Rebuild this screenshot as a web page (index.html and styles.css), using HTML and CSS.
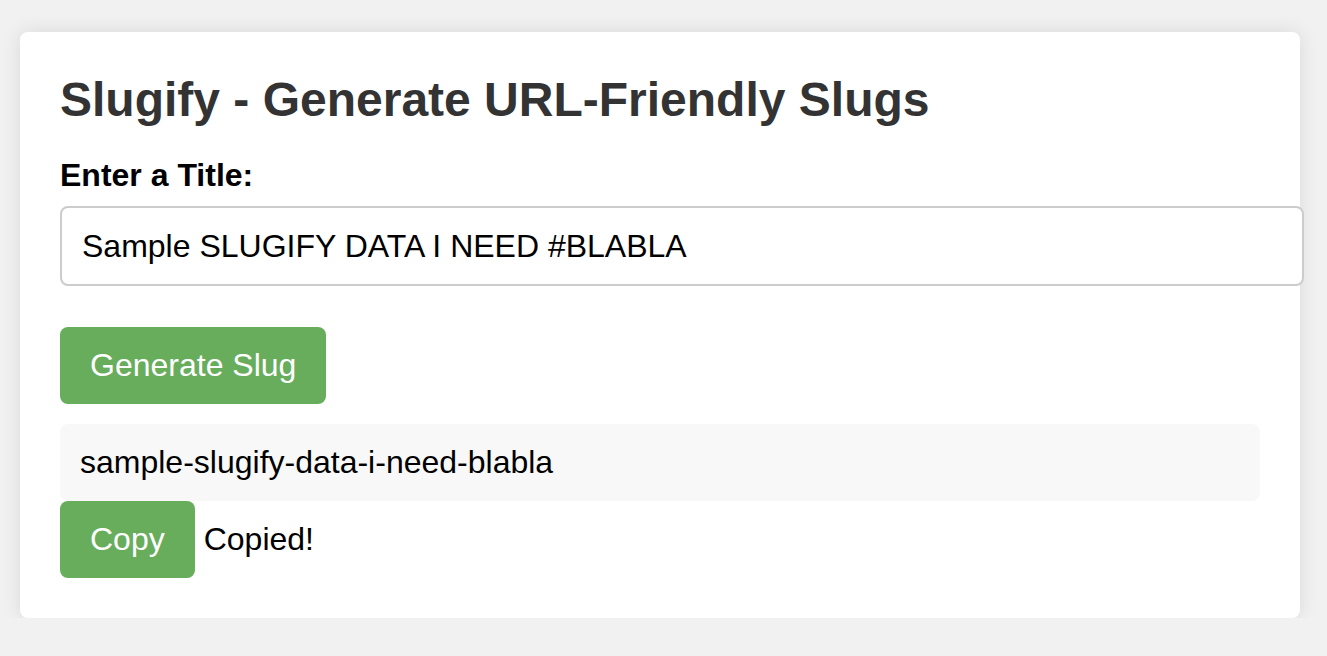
FILE: index.html
```html
<!DOCTYPE html>
<html lang="en">
<head>
<meta charset="utf-8">
<title>Slugify</title>
<link rel="stylesheet" href="styles.css">
</head>
<body>
<div class="card">
  <h1 class="title">Slugify - Generate URL-Friendly Slugs</h1>
  <label class="label" for="title-input">Enter a Title:</label>
  <input id="title-input" class="text-input" type="text" value="Sample SLUGIFY DATA I NEED #BLABLA">
  <div class="actions">
    <button class="btn" type="button">Generate Slug</button>
  </div>
  <div class="result">sample-slugify-data-i-need-blabla</div>
  <div class="copy-row">
    <button class="btn" type="button">Copy</button>
    <span class="copied">Copied!</span>
  </div>
</div>
</body>
</html>
```

FILE: styles.css
```css
html, body {
  margin: 0;
  padding: 0;
}

body {
  background: #f1f1f1;
  font-family: "Liberation Sans", Arial, Helvetica, sans-serif;
  padding: 32px 20px 0 20px;
}

.card {
  width: 1200px;
  padding: 40px;
  background: #ffffff;
  border-radius: 8px;
  box-shadow: 0 0 20px rgba(0, 0, 0, 0.1);
}

.title {
  margin: 0 0 30px 0;
  font-size: 48px;
  font-weight: bold;
  color: #333333;
  line-height: normal;
}

.label {
  display: block;
  font-size: 32px;
  font-weight: bold;
  color: #000000;
  margin-bottom: 12px;
}

.text-input {
  display: block;
  width: 1200px;
  box-sizing: content-box;
  padding: 20px;
  margin: 0;
  border: 2px solid #cccccc;
  border-radius: 8px;
  font-family: "Liberation Sans", Arial, Helvetica, sans-serif;
  font-size: 32px;
  line-height: 36px;
  height: 36px;
  color: #000000;
  background: #ffffff;
  outline: none;
}

.actions {
  margin-top: 41px;
  display: flex;
}

.btn {
  border: none;
  border-radius: 8px;
  padding: 20px 30px;
  margin: 0;
  background: #67ad5c;
  color: #ffffff;
  font-family: "Liberation Sans", Arial, Helvetica, sans-serif;
  font-size: 32px;
  line-height: 37px;
  cursor: pointer;
}

.result {
  margin-top: 20px;
  padding: 20px;
  background: #f8f8f8;
  border-radius: 8px;
  font-size: 32px;
  line-height: 37px;
  color: #000000;
}

.copy-row {
  display: flex;
  align-items: baseline;
  gap: 9px;
}

.copied {
  font-size: 32px;
  color: #000000;
}
```
